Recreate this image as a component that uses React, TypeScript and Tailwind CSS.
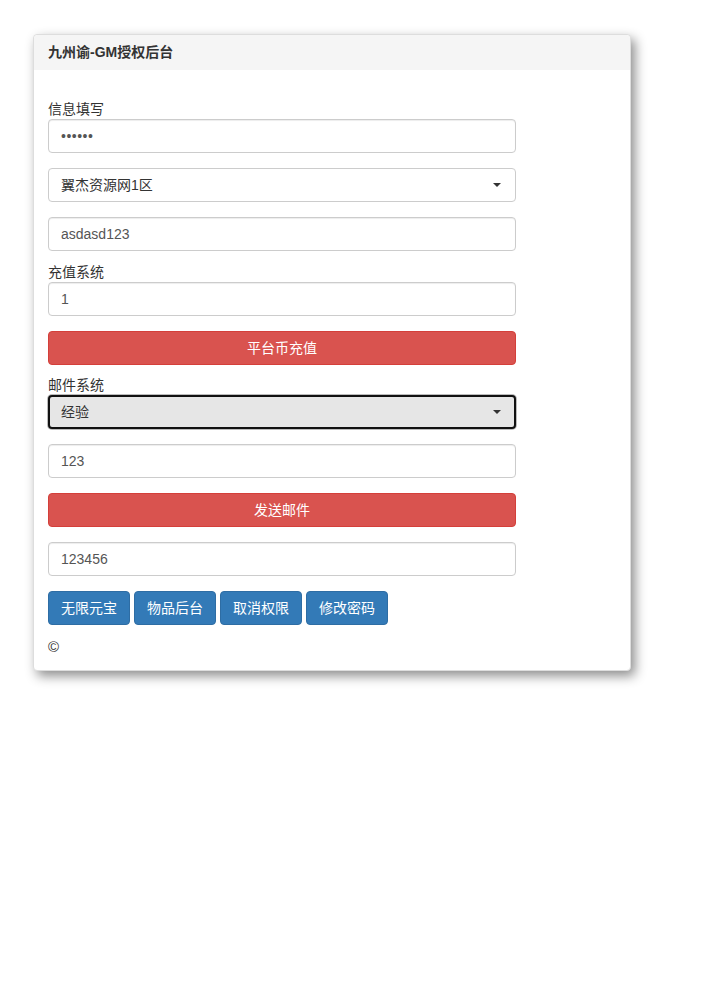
const font = '[font-family:"Liberation_Sans","Noto_Sans_CJK_SC",sans-serif]'

function Caret() {
  return (
    <svg width="8" height="4" viewBox="0 0 8 4" className="shrink-0">
      <path d="M0 0h8L4 4z" fill="#333" />
    </svg>
  )
}

function TextInput({ value, className = '' }: { value: string; className?: string }) {
  return (
    <div
      className={`flex h-[34px] w-[468px] items-center rounded border border-[#ccc] bg-white px-3 text-[14px] text-[#555] shadow-[inset_0_1px_1px_rgba(0,0,0,0.075)] ${className}`}
    >
      {value}
    </div>
  )
}

function SelectBox({ value, focused, className = '' }: { value: string; focused?: boolean; className?: string }) {
  return (
    <div
      className={
        focused
          ? `flex h-[34px] w-[468px] items-center justify-between rounded border-2 border-[#111] bg-[#e6e6e6] pl-[11px] pr-[13px] text-[14px] text-[#333] shadow-[0_0_0_1px_#bbb] ${className}`
          : `flex h-[34px] w-[468px] items-center justify-between rounded border border-[#ccc] bg-white pl-3 pr-[14px] text-[14px] text-[#333] ${className}`
      }
    >
      <span>{value}</span>
      <Caret />
    </div>
  )
}

function RedButton({ label, className = '' }: { label: string; className?: string }) {
  return (
    <button
      className={`flex h-[34px] w-[468px] items-center justify-center rounded border border-[#d43f3a] bg-[#d9534f] text-[14px] text-white ${className}`}
    >
      {label}
    </button>
  )
}

function Label({ text, className = '' }: { text: string; className?: string }) {
  return <div className={`h-5 text-[14px] leading-5 text-[#333] ${className}`}>{text}</div>
}

export default function App() {
  const tools = ['无限元宝', '物品后台', '取消权限', '修改密码']

  return (
    <div className={`min-h-[1006px] bg-white pl-[33px] pt-[34px] ${font}`}>
      <div className="w-[598px] rounded border border-[#ddd] bg-white shadow-[4px_5px_12px_rgba(0,0,0,0.45)]">
        <div className="flex h-[35px] items-center rounded-t bg-[#f5f5f5] px-[14px] text-[14px] font-bold text-[#333]">
          九州谕-GM授权后台
        </div>
        <div className="flex flex-col px-[14px] pb-[13px] pt-[29px]">
          <Label text="信息填写" />
          <TextInput value="••••••" className="text-[10px] tracking-[0.5px]" />
          <SelectBox value="翼杰资源网1区" className="mt-[15px]" />
          <TextInput value="asdasd123" className="mt-[15px]" />

          <Label text="充值系统" className="mt-[11px]" />
          <TextInput value="1" />
          <RedButton label="平台币充值" className="mt-[15px]" />

          <Label text="邮件系统" className="mt-[10px]" />
          <SelectBox value="经验" focused />
          <TextInput value="123" className="mt-[15px]" />
          <RedButton label="发送邮件" className="mt-[15px]" />
          <TextInput value="123456" className="mt-[15px]" />

          <div className="mt-[15px] flex gap-1">
            {tools.map((t) => (
              <button
                key={t}
                className="h-[34px] rounded border border-[#2e6da4] bg-[#337ab7] px-3 text-[14px] text-white"
              >
                {t}
              </button>
            ))}
          </div>

          <div className="mt-[12px] h-5 text-[15px] leading-5 text-[#333]">©</div>
        </div>
      </div>
    </div>
  )
}
